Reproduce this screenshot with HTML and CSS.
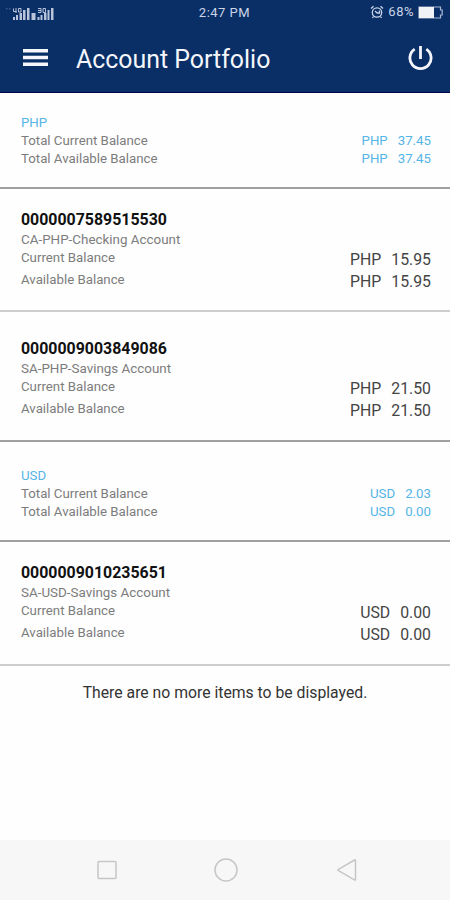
FILE: index.html
```html
<!DOCTYPE html>
<html lang="en">
<head>
<meta charset="utf-8">
<title>Account Portfolio</title>
<link rel="stylesheet" href="styles.css">
</head>
<body>
<header class="top">
  <div class="status">
    <svg class="signal" width="50" height="16" viewBox="0 0 50 16" fill="#b9c4da">
      <path d="M1 3h1.500v1.500H1zM4 3h1.500v1.500H4z" opacity=".3"/>
      <path d="M8 12h2v3H8zM11 10h2v5h-2zM14.500 8h2.500v7h-2.500zM18 5h2.500v10H18zM22 3h2.500v12H22zM26.500 8h4v7h-4zM32.500 12h2v3h-2zM35.500 10h2v5h-2zM39 8h2.500v7H39zM42.500 5h2v10h-2zM46 3h2.500v12H46z"/>
      <path d="M8.500 3.500v3h3M11 3v5M13.500 3.500h2.500v3.500h-2.500zM33 3.500h3v4h-3M33 5.500h3M38 3.500h2.500v4H38z" fill="none" stroke="#b9c4da"/>
    </svg>
    <span class="clock">2:47 PM</span>
    <div class="power-state">
      <svg width="14" height="14" viewBox="0 0 14 14" fill="none" stroke="#cbd5e8" stroke-width="1.300">
        <circle cx="7" cy="7.500" r="4.700"/><path d="M1 3.500 3.500 1.300M13 3.500 10.500 1.300M3.500 11.500 2.500 13M10.500 11.500l1 1.500M5 6l2.200 2H9.500V5.500"/>
      </svg>
      <span class="percent">68%</span>
      <svg width="26" height="13" viewBox="0 0 26 13">
        <path d="M1 1h21.500v3h1.700v5h-1.700v3H1z" fill="none" stroke="#a9b7d2" stroke-width="1.200"/><path d="M1 1h15v11H1z" fill="#f0f2f6"/>
      </svg>
    </div>
  </div>
  <div class="bar">
    <svg class="menu" width="25" height="19" viewBox="0 0 25 19" fill="#f5f6fb"><path d="M0 1h25v3.500H0zM0 7.700h25v3.500H0zM0 14.500h25V18H0z"/></svg>
    <h1 class="title">Account Portfolio</h1>
    <svg class="power" width="26" height="26" viewBox="0 0 26 26" fill="none" stroke="#f5f6fb" stroke-width="2.800"><path d="M13.500 1v13M7.700 4.200a10.600 10.600 0 1 0 11.600 0"/></svg>
  </div>
</header>
<main class="list">
  <section class="total">
    <div class="labels"><div class="code">PHP</div><div>Total Current Balance</div><div>Total Available Balance</div></div>
    <div class="sums"><div><span>PHP</span><span>37.45</span></div><div><span>PHP</span><span>37.45</span></div></div>
  </section>
  <section class="account">
    <div class="labels"><h2 class="number">0000007589515530</h2><div class="kind">CA-PHP-Checking Account</div><div>Current Balance</div><div class="available">Available Balance</div></div>
    <div class="amounts"><div><span>PHP</span><span>15.95</span></div><div><span>PHP</span><span>15.95</span></div></div>
  </section>
  <section class="account following">
    <div class="labels"><h2 class="number">0000009003849086</h2><div class="kind">SA-PHP-Savings Account</div><div>Current Balance</div><div class="available">Available Balance</div></div>
    <div class="amounts"><div><span>PHP</span><span>21.50</span></div><div><span>PHP</span><span>21.50</span></div></div>
  </section>
  <section class="total second">
    <div class="labels"><div class="code">USD</div><div>Total Current Balance</div><div>Total Available Balance</div></div>
    <div class="sums"><div><span>USD</span><span>2.03</span></div><div><span>USD</span><span>0.00</span></div></div>
  </section>
  <section class="account last">
    <div class="labels"><h2 class="number">0000009010235651</h2><div class="kind">SA-USD-Savings Account</div><div>Current Balance</div><div class="available">Available Balance</div></div>
    <div class="amounts"><div><span>USD</span><span>0.00</span></div><div><span>USD</span><span>0.00</span></div></div>
  </section>
  <p class="end">There are no more items to be displayed.</p>
</main>
<nav class="nav">
  <svg width="24" height="24" viewBox="0 0 24 24"><rect x="3" y="3.500" width="18" height="17" rx="1"/></svg>
  <svg width="24" height="24" viewBox="0 0 24 24"><circle cx="11" cy="12" r="11"/></svg>
  <svg width="24" height="24" viewBox="0 0 24 24"><path d="M20.500 2.500v19q0 1-1 .4L3.500 12.700q-1.200-.7 0-1.400L19.500 2q1-.5 1 .5z"/></svg>
</nav>
</body>
</html>
```
FILE: styles.css
```css
* { box-sizing: border-box; }
body {
  margin: 0;
  height: 900px;
  display: flex;
  flex-direction: column;
  background: #fefefe;
  color: #7c7c7c;
  font: 13.25px/18px Roboto, sans-serif;
}
.top { height: 93px; background: #092f66; border-bottom: 1px solid #03034f; }
.status {
  height: 25px;
  display: grid;
  grid-template-columns: 1fr auto 1fr;
  align-items: center;
  padding: 0 6px 0 5px;
  color: #cbd5e8;
}
.clock { font-size: 13px; letter-spacing: .5px; }
.power-state { display: flex; align-items: center; justify-content: flex-end; gap: 4px; margin-top: -1px; }
.percent { font-size: 13px; letter-spacing: .5px; }
.bar { height: 67px; display: flex; align-items: center; padding: 0 17px 0 23px; }
.title { margin: 2px auto 0 28px; color: #f5f6fb; font-size: 24.9px; font-weight: 400; line-height: 30px; }
.menu, .power { margin-top: -2px; }
.list { flex: 1; }
.total, .account { display: flex; justify-content: space-between; padding: 0 19px 0 21px; }
.total { height: 96px; padding-top: 21px; border-bottom: 2px solid #a0a0a0; }
.total.second { height: 100px; padding-top: 25px; }
.code, .sums { color: #55b5e6; }
.sums { padding-top: 18px; }
.sums div, .amounts div { display: flex; justify-content: flex-end; gap: 10px; }
.account { height: 123px; padding-top: 20px; border-bottom: 2px solid #cecece; }
.account.following { height: 130px; padding-top: 26px; border-color: #a0a0a0; }
.account.last { height: 124px; padding-top: 20px; }
.number { margin: 0; color: #111; font-size: 15.9px; font-weight: 700; line-height: 22px; }
.kind { font-size: 13.4px; }
.available { margin-top: 4px; }
.amounts { padding-top: 40px; color: #444; font-size: 15.8px; line-height: 22px; }
.end { margin: 16px 0 0; text-align: center; color: #333; font-size: 15.75px; line-height: 22px; }
.nav { height: 60px; display: flex; justify-content: space-between; align-items: center; padding: 0 91px 0 95px; background: #f7f7f7; }
.nav svg { fill: none; stroke: #c6c6c6; stroke-width: 1.5; overflow: visible; }
```
